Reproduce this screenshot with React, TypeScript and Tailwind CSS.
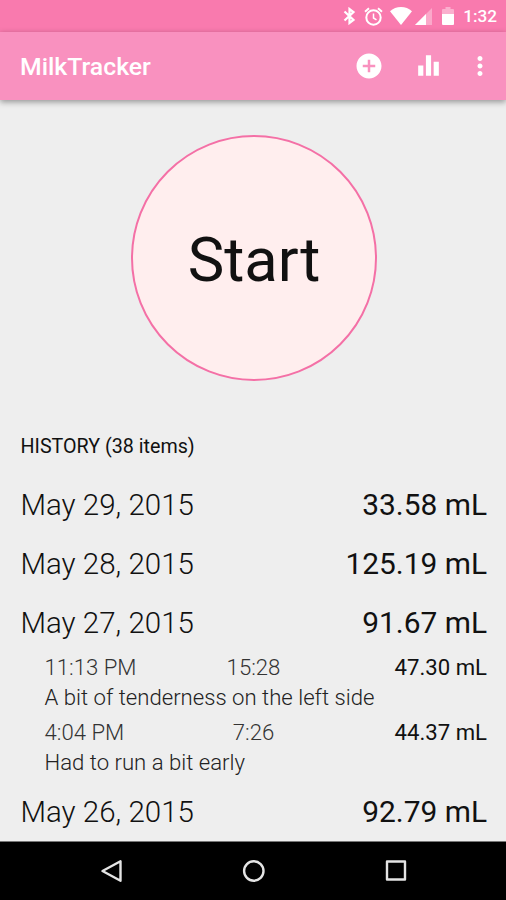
import { MdAddCircle, MdEqualizer, MdMoreVert } from "react-icons/md"

type Session = {
    time: string
    duration: string
    amount: string
    note: string
}

type Day = {
    date: string
    amount: string
    sessions?: Session[]
}

const days: Day[] = [
    { date: "May 29, 2015", amount: "33.58 mL" },
    { date: "May 28, 2015", amount: "125.19 mL" },
    {
        date: "May 27, 2015",
        amount: "91.67 mL",
        sessions: [
            { time: "11:13 PM", duration: "15:28", amount: "47.30 mL", note: "A bit of tenderness on the left side" },
            { time: "4:04 PM", duration: "7:26", amount: "44.37 mL", note: "Had to run a bit early" },
        ],
    },
    { date: "May 26, 2015", amount: "92.79 mL" },
]

const StatusBar = () => (
    <div className="h-[31.5px] shrink-0 bg-[#f97aae] flex items-center justify-end pr-[9px] pt-px text-white">
        <svg className="w-[13px] h-[18px] mr-[8px]" viewBox="0 0 13 18" fill="none" stroke="currentColor" strokeWidth="2.2">
            <path d="M1.500 4.500 10.500 13l-4 3v-14L10.500 5l-9 8.500" />
        </svg>
        <svg className="w-[19px] h-[19px] mr-[7px]" viewBox="0 0 19 19" fill="none" stroke="currentColor" strokeWidth="2">
            <circle cx="9.500" cy="10.500" r="7.200" />
            <path d="M9.500 6.500v4.500l3 1.800" strokeWidth="1.5" />
            <path d="M1 4.700 5 1.300M18 4.700 14 1.300" />
        </svg>
        <svg className="w-[22px] h-[18px] mr-[3px]" viewBox="0 0 22 18" fill="currentColor">
            <path d="M11 18 0 4.200C3 1.600 6.800 0 11 0s8 1.600 11 4.200z" />
        </svg>
        <svg className="w-[17px] h-[17px] mr-[10px]" viewBox="0 0 17 17" fill="currentColor">
            <path d="M0 17 17 0v17z" opacity=".35" />
            <path d="M0 17 11 6v11z" />
        </svg>
        <svg className="w-[12px] h-[18px] mr-[9px]" viewBox="0 0 12 18" fill="currentColor">
            <path d="M0 7V3q0-1 1-1h2.500V0h5v2H11q1 0 1 1v4z" opacity=".4" />
            <path d="M0 7h12v10q0 1-1 1H1q-1 0-1-1z" />
        </svg>
        <span className="text-[17.2px] font-medium leading-7">1:32</span>
    </div>
)

const Toolbar = () => (
    <div className="h-[68.5px] shrink-0 bg-[#f991bf] flex items-center pl-5 pr-[11px] text-white shadow-[0_2px_6px_rgba(0,0,0,0.38)]">
        <h1 className="flex-1 text-[24.8px] font-medium pt-0.5">MilkTracker</h1>
        <MdAddCircle className="size-[30px] mr-[29px]" />
        <MdEqualizer className="size-[31px] mr-[21px]" />
        <MdMoreVert className="size-[30px]" />
    </div>
)

const SessionRow = ({ session }: { session: Session }) => (
    <li className="text-[22.15px] leading-[30px] pb-[5px]">
        <div className="grid grid-cols-[149px_120px_1fr]">
            <span className="font-light text-[#333]">{session.time}</span>
            <span className="font-light text-[#333] text-center">{session.duration}</span>
            <span className="text-right">{session.amount}</span>
        </div>
        <p className="font-light text-[#222]">{session.note}</p>
    </li>
)

const DayRow = ({ day }: { day: Day }) => (
    <li>
        <div className="flex justify-between items-center h-[59px] text-[29.5px]">
            <span className="font-light">{day.date}</span>
            <span className="text-[29.9px]">{day.amount}</span>
        </div>
        {day.sessions && (
            <ul className="pl-6 -mt-px pb-px">
                {day.sessions.map((session) => (
                    <SessionRow key={session.time} session={session} />
                ))}
            </ul>
        )}
    </li>
)

const NavBar = () => (
    <div className="h-[59px] shrink-0 bg-black border-t border-[#777] flex justify-between items-center pl-[98px] pr-[96px]">
        <svg className="size-7" viewBox="0 0 28 28" fill="none" stroke="#e4e4e4" strokeWidth="2.4" strokeLinejoin="round">
            <path d="M22.500 4.300v19.500L4.500 14z" />
        </svg>
        <svg className="size-7" viewBox="0 0 28 28" fill="none" stroke="#e4e4e4" strokeWidth="2.4">
            <circle cx="13.800" cy="14" r="9.700" />
        </svg>
        <svg className="size-7" viewBox="0 0 28 28" fill="none" stroke="#e4e4e4" strokeWidth="2.4" strokeLinejoin="round">
            <path d="M5 4.500h18v18H5z" />
        </svg>
    </div>
)

export default function App() {
    return (
        <div className="h-[900px] w-[506px] flex flex-col bg-[#eee] text-[#111] font-['Roboto',sans-serif] overflow-hidden">
            <StatusBar />
            <Toolbar />
            <main className="flex-1 min-h-0 overflow-hidden pt-[35px]">
                <button className="block ml-[131px] size-[246px] rounded-full border-2 border-[#f470a6] bg-[#ffeeee] text-[61.5px] pt-[4px]">
                    Start
                </button>
                <section className="pl-[20.5px] pr-[19px] pt-[52px]">
                    <h2 className="text-[19.7px] leading-7 mb-[14.6px]">HISTORY (38 items)</h2>
                    <ul>
                        {days.map((day) => (
                            <DayRow key={day.date} day={day} />
                        ))}
                    </ul>
                </section>
            </main>
            <NavBar />
        </div>
    )
}
